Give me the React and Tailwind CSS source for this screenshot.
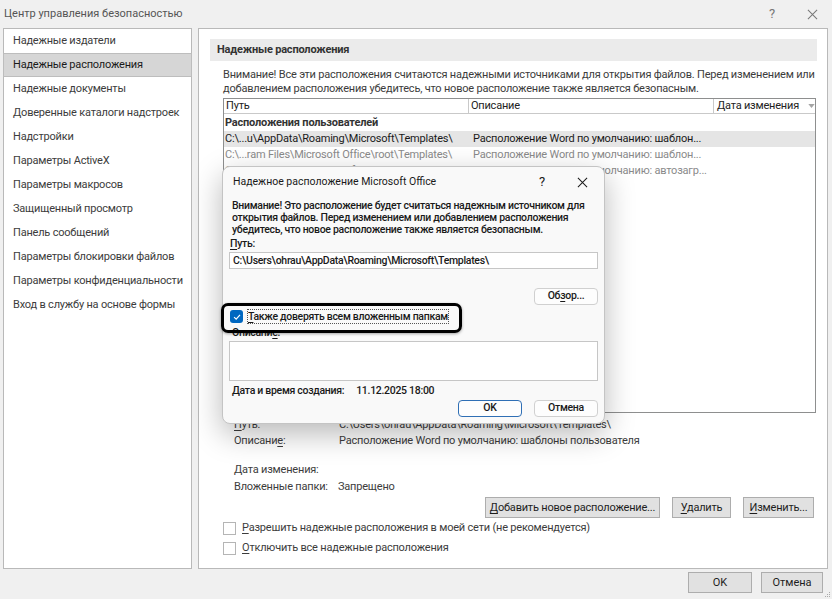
import React from 'react';

const sideItems = [
  'Надежные издатели',
  'Надежные расположения',
  'Надежные документы',
  'Доверенные каталоги надстроек',
  'Надстройки',
  'Параметры ActiveX',
  'Параметры макросов',
  'Защищенный просмотр',
  'Панель сообщений',
  'Параметры блокировки файлов',
  'Параметры конфиденциальности',
  'Вход в службу на основе формы',
];

const U = ({ children }) => <span className="underline underline-offset-2">{children}</span>;

const CloseIcon = ({ className }) => (
  <svg viewBox="0 0 12 12" className={className} fill="none" stroke="currentColor" strokeWidth="1.1">
    <path d="M1 1L11 11M11 1L1 11" />
  </svg>
);

const Check = () => (
  <svg viewBox="0 0 12 12" className="w-[10px] h-[10px]" fill="none" stroke="white" strokeWidth="1.4">
    <path d="M2.5 6.2L5 8.6L9.6 3.4" />
  </svg>
);

const WinButton = ({ className = '', children }) => (
  <button className={`shrink-0 whitespace-nowrap h-[21px] bg-[#e1e1e1] border border-[#adadad] text-[11px] text-[#1e1e1e] leading-none ${className}`}>
    {children}
  </button>
);

const DlgButton = ({ className = '', children }) => (
  <button className={`shrink-0 whitespace-nowrap h-[17px] bg-[#fdfdfd] border rounded-[4px] text-[10.5px] text-[#1a1a1a] leading-none ${className}`}>
    {children}
  </button>
);

function Sidebar() {
  return (
    <div className="w-[189px] shrink-0 h-full bg-white border border-[#b9b9b9] tracking-[-0.2px]">
      {sideItems.map((item, i) => (
        <div
          key={item}
          className={`h-[24px] flex items-center px-[9px] text-[11px] whitespace-nowrap ${
            i === 1 ? 'bg-[#d6d6d6] border border-[#bdbdbd] text-[#1a1a1a] -mx-px' : 'text-[#3c3c3c]'
          }`}
        >
          {item}
        </div>
      ))}
    </div>
  );
}

function LocationsTable() {
  return (
    <div className="w-[593px] h-[315px] border border-[#8e8f8f] bg-white text-[11px] overflow-hidden whitespace-nowrap">
      <div className="flex h-[15px] leading-[14px] text-[#222]">
        <div className="w-[246px] border-r border-b border-[#c9c9c9] pl-[2px]">Путь</div>
        <div className="w-[246px] border-r border-b border-[#c9c9c9] pl-[2px]">Описание</div>
        <div className="flex-1 border-b border-[#c9c9c9] pl-[3px] flex items-center gap-[9px]">
          Дата изменения
          <svg viewBox="0 0 8 5" className="w-[7px] h-[4px]"><path d="M0 0H8L4 5Z" fill="#a5a5a5" /></svg>
        </div>
      </div>
      <div className="h-[16px] mt-[1px] pl-[1px] font-bold text-[#333] leading-[16px]">Расположения пользователей</div>
      <div className="flex h-[16px] leading-[16px] bg-[#e5e5e5] text-[#1a1a1a]">
        <div className="w-[247px] pl-[1px] overflow-hidden">C:\...u\AppData\Roaming\Microsoft\Templates\</div>
        <div className="w-[246px] pl-[2px]">Расположение Word по умолчанию: шаблон...</div>
      </div>
      <div className="flex h-[16px] leading-[16px] text-[#8a8a8a]">
        <div className="w-[247px] pl-[1px] overflow-hidden">C:\...ram Files\Microsoft Office\root\Templates\</div>
        <div className="w-[246px] pl-[2px]">Расположение Word по умолчанию: шаблон...</div>
      </div>
      <div className="flex h-[16px] leading-[16px] text-[#8a8a8a]">
        <div className="w-[247px] pl-[1px] overflow-hidden">C:\...ata\Roaming\Microsoft\Word\Startup\</div>
        <div className="w-[246px] pl-[2px]">Расположение Word по умолчанию: автозагр...</div>
      </div>
    </div>
  );
}

function MainPanel() {
  return (
    <div className="flex-1 min-w-0 h-full bg-white border border-[#b9b9b9] pt-[10px] pl-[11px] pr-[10px] text-[#3c3c3c] whitespace-nowrap tracking-[-0.2px]">
      <div className="h-[22px] bg-[#ebebeb] pl-[7px] flex items-center text-[11px] font-bold text-[#333]">
        Надежные расположения
      </div>
      <div className="ml-[13px] mt-[7px] text-[11px] leading-[14px]">
        Внимание! Все эти расположения считаются надежными источниками для открытия файлов. Перед изменением или
        <br />
        добавлением расположения убедитесь, что новое расположение также является безопасным.
      </div>
      <div className="ml-[13px] mt-[2px]">
        <LocationsTable />
      </div>
      <div className="ml-[24px] mt-[4px] text-[11px] leading-[16px]">
        <div className="flex h-[16px]">
          <div className="w-[105px] shrink-0"><U>П</U>уть:</div>
          <div>C:\Users\ohrau\AppData\Roaming\Microsoft\Templates\</div>
        </div>
        <div className="flex h-[29px]">
          <div className="w-[105px] shrink-0">Описани<U>е</U>:</div>
          <div>Расположение Word по умолчанию: шаблоны пользователя</div>
        </div>
        <div className="h-[17px]">Дата изменения:</div>
        <div className="flex h-[17px]">
          <div className="w-[104px] shrink-0">Вложенные папки:</div>
          <div>Запрещено</div>
        </div>
      </div>
      <div className="flex justify-end gap-[12px] mt-[1px] pr-[3px]">
        <WinButton className="w-[175px]"><U>Д</U>обавить новое расположение...</WinButton>
        <WinButton className="w-[59px]"><U>У</U>далить</WinButton>
        <WinButton className="w-[71px]"><U>И</U>зменить...</WinButton>
      </div>
      <div className="ml-[13px] mt-[3px] text-[11px] flex flex-col gap-[6px]">
        <div className="flex items-center gap-[6px] h-[14px]">
          <div className="w-[13px] h-[13px] border border-[#b5b5b5] bg-white" />
          <span><U>Р</U>азрешить надежные расположения в моей сети (не рекомендуется)</span>
        </div>
        <div className="flex items-center gap-[6px] h-[14px]">
          <div className="w-[13px] h-[13px] border border-[#b5b5b5] bg-white" />
          <span><U>О</U>тключить все надежные расположения</span>
        </div>
      </div>
    </div>
  );
}

function TrustedDialog() {
  return (
    <div className="absolute left-[222px] top-[166px] w-[383px] h-[258px] bg-[#f9f9f9] border border-[#c4c4c4] rounded-[8px] shadow-[0_10px_30px_rgba(0,0,0,0.28)] text-[#1a1a1a] whitespace-nowrap">
      <div className="h-[30px] flex items-center pl-[10px] text-[10.5px]">
        <span className="flex-1">Надежное расположение Microsoft Office</span>
        <span className="w-[40px] text-center text-[13px]">?</span>
        <span className="w-[40px] flex justify-center mr-[2px]"><CloseIcon className="w-[11px] h-[11px]" /></span>
      </div>
      <div className="px-[6px] text-[10.5px] tracking-[-0.3px] font-medium">
        <div className="mt-[3px] pl-[3px] h-[36px] leading-[12px]">
          Внимание! Это расположение будет считаться надежным источником для
          <br />
          открытия файлов. Перед изменением или добавлением расположения
          <br />
          убедитесь, что новое расположение также является безопасным.
        </div>
        <div className="mt-[1px] pl-[1px] h-[13px] leading-[13px]"><U>П</U>уть:</div>
        <div className="mt-[2px] h-[17px] bg-white border border-[#c6c6c6] pl-[3px] leading-[15px]">
          C:\Users\ohrau\AppData\Roaming\Microsoft\Templates\
        </div>
        <div className="flex justify-end mt-[19px]">
          <DlgButton className="w-[64px] border-[#d0d0d0] font-medium">Об<U>з</U>ор...</DlgButton>
        </div>
        <div className="h-[23px] flex items-center pl-[1px] gap-[5px]">
          <div className="w-[13px] h-[13px] rounded-[3px] bg-[#0067c0] flex items-center justify-center">
            <Check />
          </div>
          <span className="outline outline-1 outline-dotted outline-[#555] leading-[13px]"><U>Т</U>акже доверять всем вложенным папкам</span>
        </div>
        <div className="h-[10px] leading-[10px] pl-[3px]">Описани<U>е</U>:</div>
        <div className="mt-[3px] h-[40px] bg-white border border-[#c6c6c6]" />
        <div className="flex gap-[12px] mt-[3px] h-[14px] leading-[14px] pl-[3px]">
          <span>Дата и время создания:</span>
          <span>11.12.2025 18:00</span>
        </div>
        <div className="flex justify-end gap-[12px] mt-[2px]">
          <DlgButton className="w-[64px] border-[#2f6fb5] font-medium">OK</DlgButton>
          <DlgButton className="w-[64px] border-[#d0d0d0] font-medium">Отмена</DlgButton>
        </div>
      </div>
      <div className="absolute left-[-2px] top-[136px] w-[241px] h-[30px] border-[3px] border-black rounded-[7px] shadow-[0_1px_3px_rgba(0,0,0,0.35)]" />
    </div>
  );
}

export default function App() {
  return (
    <div className="relative w-[832px] h-[599px] bg-[#f0f0f0] overflow-hidden font-['Roboto',sans-serif] flex flex-col">
      <div className="h-[28px] flex items-center pl-[4px] text-[11px] text-[#555]">
        <span className="flex-1">Центр управления безопасностью</span>
        <span className="w-[40px] text-center text-[13px] text-[#777]">?</span>
        <span className="w-[40px] flex justify-center text-[#777]"><CloseIcon className="w-[11px] h-[11px]" /></span>
      </div>
      <div className="h-[541px] flex gap-[6px] pl-[3px] pr-[4px]">
        <Sidebar />
        <MainPanel />
      </div>
      <div className="flex justify-end gap-[9px] pr-[9px] pt-[3px]">
        <WinButton className="w-[64px] h-[20px]">OK</WinButton>
        <WinButton className="w-[62px] h-[20px]">Отмена</WinButton>
      </div>
      <svg viewBox="0 0 6 6" className="absolute right-[1px] bottom-[1px] w-[6px] h-[6px]">
        <rect x="4" y="0" width="1" height="1" fill="#aaa" />
        <rect x="2" y="2" width="1" height="1" fill="#aaa" />
        <rect x="4" y="2" width="1" height="1" fill="#aaa" />
        <rect x="0" y="4" width="1" height="1" fill="#aaa" />
        <rect x="2" y="4" width="1" height="1" fill="#aaa" />
        <rect x="4" y="4" width="1" height="1" fill="#aaa" />
      </svg>
      <TrustedDialog />
    </div>
  );
}
